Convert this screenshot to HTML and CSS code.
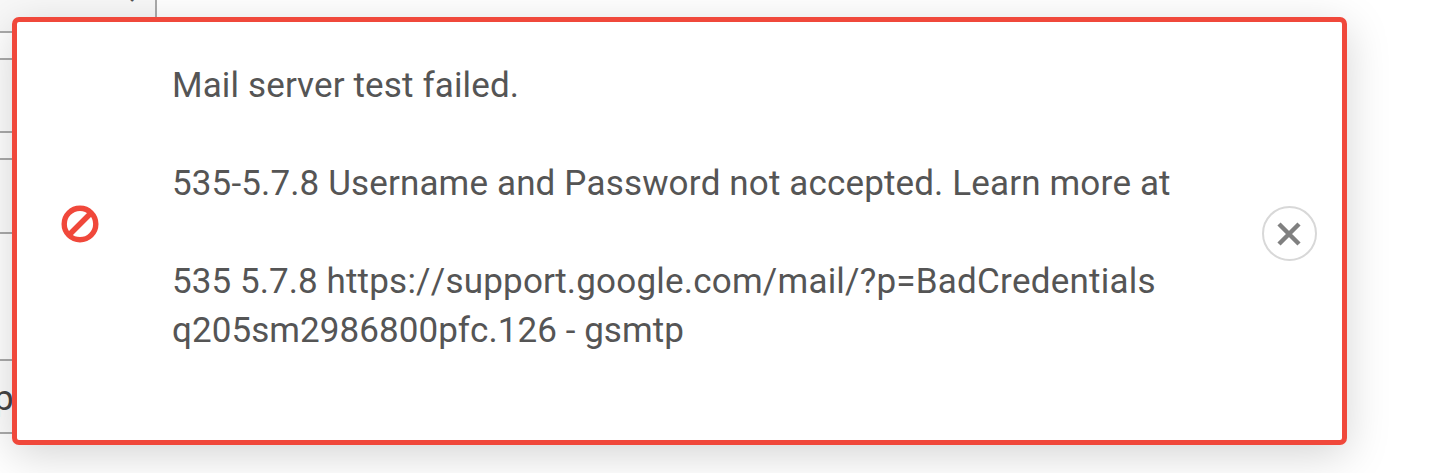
FILE: index.html
```
<!DOCTYPE html>
<html lang="en">
<head>
    <meta charset="UTF-8">
    <meta name="viewport" content="width=device-width, initial-scale=1.0">
    <title>Mail server test</title>
    <link rel="stylesheet" href="styles.css">
</head>
<body>
    <form class="settings">
        <div class="field field-first"><span>,</span></div>
        <div class="field"></div>
        <div class="field field-tall"></div>
        <div class="field field-last"><span>p</span></div>
    </form>

    <div class="toast" role="alert">
        <svg class="toast-icon" viewBox="0 0 38 38" aria-hidden="true">
            <circle cx="19" cy="19" r="15.8"/>
            <path d="M30 8L8 30"/>
        </svg>
        <div class="toast-text">
            <p>Mail server test failed.</p>
            <p>535-5.7.8 Username and Password not accepted. Learn more at</p>
            <p class="details">535 5.7.8 <span class="url">https://support.google.com/mail/?p=BadCredentials</span><br>q205sm2986800pfc.126 - gsmtp</p>
        </div>
        <button class="toast-close" type="button" aria-label="Close">
            <svg viewBox="0 0 24 24"><path d="M2 2L22 22M22 2L2 22"/></svg>
        </button>
    </div>
</body>
</html>
```

FILE: styles.css
```
* {
    box-sizing: border-box;
}

body {
    margin: 0;
    height: 473px;
    overflow: hidden;
    position: relative;
    background-color: white;
    font-family: Roboto, "Liberation Sans", sans-serif;
    font-size: 35px;
    color: #555;
}

.settings {
    width: 157px;
}

.field {
    width: 100%;
    height: 75px;
    margin-bottom: 25px;
    border: 2px solid #aaa;
    border-left: 0;
    background-color: #fdfdfd;
}

.field-first {
    height: 33px;
    border-top: 0;
    line-height: 0;
    padding-left: 130px;
    background-color: #f8f8f8;
    overflow: hidden;
}

.field-first span {
    display: block;
    padding-top: 1px;
    margin-top: -15px;
}

.field-tall {
    height: 76px;
}

.field-last {
    margin-top: 125px;
    line-height: 75px;
    color: #444;
}

.field-last span {
    margin-left: -6px;
}

/* notification drawn over the form */
.toast {
    position: absolute;
    top: 17px;
    left: 12px;
    width: 1335px;
    height: 428px;
    display: flex;
    border: 5px solid #f0483b;
    border-radius: 7px;
    background-color: white;
    box-shadow: 0 10px 44px rgba(0, 0, 0, 0.17);
}

.toast-icon {
    width: 38px;
    height: 38px;
    margin: 183px 73px 0 44px;
    fill: none;
    stroke: #f0483b;
    stroke-width: 5.4;
}

.toast-text {
    flex: 1;
    padding-top: 39px;
    line-height: 49px;
    letter-spacing: 0.14px;
    font-kerning: none;
    white-space: nowrap;
}

.toast-text p {
    margin: 0 0 49px;
}

.toast-text .details {
    letter-spacing: 0.06px;
}

.toast-text .url {
    letter-spacing: 0.21px;
}

.toast-close {
    width: 55px;
    height: 55px;
    margin: 184px 25px 0 0;
    padding: 0 2px 0 0;
    display: flex;
    align-items: center;
    justify-content: center;
    border: 2px solid #d8d8d8;
    border-radius: 50%;
    background-color: white;
}

.toast-close svg {
    width: 24px;
    height: 24px;
    fill: none;
    stroke: #808080;
    stroke-width: 4.5;
}
```
